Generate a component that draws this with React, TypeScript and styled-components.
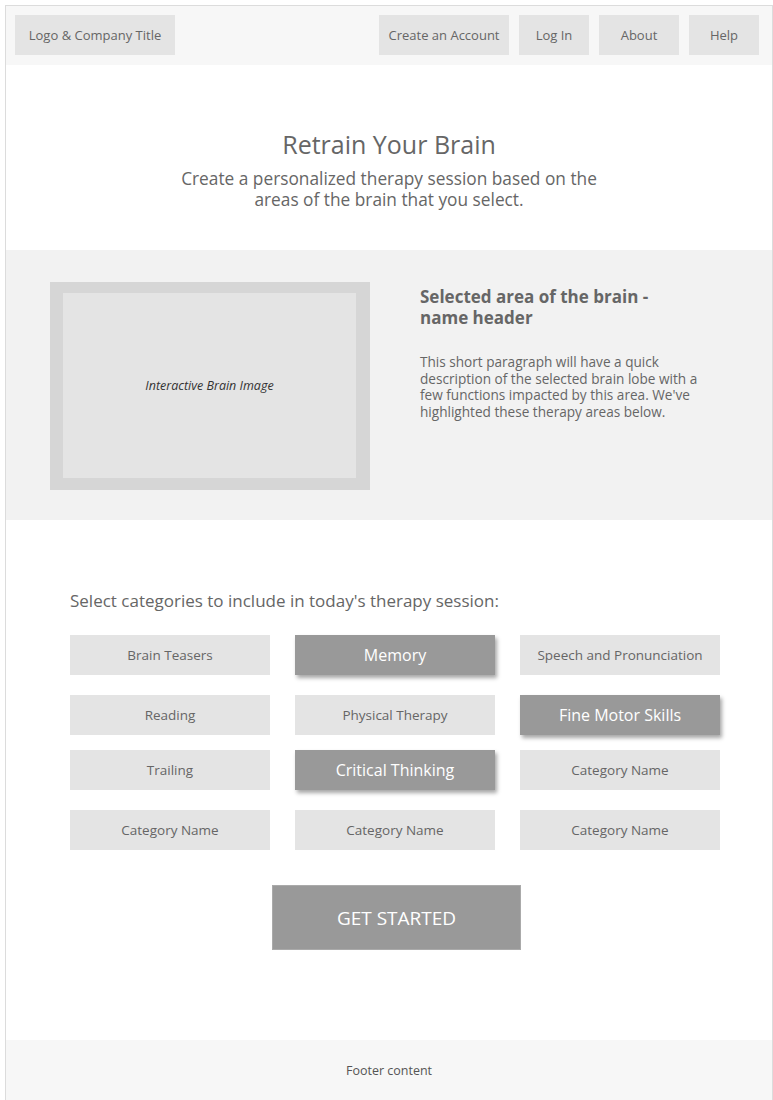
import styled, { createGlobalStyle } from "styled-components";

const GlobalStyle = createGlobalStyle`
  html, body {
    margin: 0;
    padding: 0;
    background: #fff;
  }
  body {
    font-family: "Open Sans", "Noto Sans", sans-serif;
    color: #666;
  }
`;

const navItems = [
  { label: "Create an Account", width: 130 },
  { label: "Log In", width: 70 },
  { label: "About", width: 80 },
  { label: "Help", width: 70 },
];

const categoryRows = [
  {
    top: 0,
    items: [
      { label: "Brain Teasers", active: false },
      { label: "Memory", active: true },
      { label: "Speech and Pronunciation", active: false },
    ],
  },
  {
    top: 20,
    items: [
      { label: "Reading", active: false },
      { label: "Physical Therapy", active: false },
      { label: "Fine Motor Skills", active: true },
    ],
  },
  {
    top: 15,
    items: [
      { label: "Trailing", active: false },
      { label: "Critical Thinking", active: true },
      { label: "Category Name", active: false },
    ],
  },
  {
    top: 20,
    items: [
      { label: "Category Name", active: false },
      { label: "Category Name", active: false },
      { label: "Category Name", active: false },
    ],
  },
];

export default function App() {
  return (
    <>
      <GlobalStyle />
      <Frame>
        <Header>
          <Tile $width={160}>Logo &amp; Company Title</Tile>
          <Nav>
            {navItems.map((item) => (
              <Tile key={item.label} $width={item.width}>
                {item.label}
              </Tile>
            ))}
          </Nav>
        </Header>

        <Hero>
          <Title>Retrain Your Brain</Title>
          <Subtitle>
            Create a personalized therapy session based on the
            <br />
            areas of the brain that you select.
          </Subtitle>
        </Hero>

        <Feature>
          <ImageBox>
            <ImageInner>Interactive Brain Image</ImageInner>
          </ImageBox>
          <Description>
            <AreaHeader>Selected area of the brain - name header</AreaHeader>
            <AreaText>
              This short paragraph will have a quick description of the selected
              brain lobe with a few functions impacted by this area. We've
              highlighted these therapy areas below.
            </AreaText>
          </Description>
        </Feature>

        <Categories>
          <Prompt>Select categories to include in today's therapy session:</Prompt>
          {categoryRows.map((row, i) => (
            <CategoryRow key={i} $top={row.top}>
              {row.items.map((item, j) => (
                <Category key={j} $active={item.active}>
                  {item.label}
                </Category>
              ))}
            </CategoryRow>
          ))}
          <StartButton>GET STARTED</StartButton>
        </Categories>

        <Footer>Footer content</Footer>
      </Frame>
    </>
  );
}

const Frame = styled.div`
  box-sizing: border-box;
  width: 768px;
  margin: 5px 0 0 5px;
  border: 1px solid #dcdcdc;
  border-bottom: none;
  display: flex;
  flex-direction: column;
`;

const Header = styled.header`
  height: 59px;
  box-sizing: border-box;
  background: #f7f7f7;
  display: flex;
  align-items: flex-start;
  justify-content: space-between;
  padding: 9px 13px 0 9px;
`;

const Nav = styled.nav`
  display: flex;
  gap: 10px;
`;

const Tile = styled.div<{ $width: number }>`
  width: ${(p) => p.$width}px;
  height: 40px;
  background: #e4e4e4;
  display: flex;
  align-items: center;
  justify-content: center;
  font-size: 13px;
  color: #666;
`;

const Hero = styled.section`
  height: 185px;
  display: flex;
  flex-direction: column;
  align-items: center;
  padding-top: 62px;
  box-sizing: border-box;
`;

const Title = styled.h1`
  margin: 0;
  font-size: 25px;
  font-weight: 400;
  line-height: 34px;
  color: #666;
`;

const Subtitle = styled.p`
  margin: 7px 0 0;
  font-size: 17.3px;
  line-height: 21px;
  text-align: center;
  color: #666;
`;

const Feature = styled.section`
  height: 270px;
  background: #f2f2f2;
  display: flex;
  padding: 32px 0 0 44px;
  box-sizing: border-box;
  gap: 50px;
`;

const ImageBox = styled.div`
  width: 320px;
  height: 208px;
  background: #d6d6d6;
  padding: 11px 14px 12px 13px;
  box-sizing: border-box;
`;

const ImageInner = styled.div`
  height: 100%;
  background: #e4e4e4;
  display: flex;
  align-items: center;
  justify-content: center;
  font-size: 12.5px;
  font-style: italic;
  color: #333;
`;

const Description = styled.div`
  width: 295px;
  padding-top: 4px;
`;

const AreaHeader = styled.h2`
  margin: 0;
  width: 250px;
  font-size: 17px;
  font-weight: 700;
  line-height: 21px;
  color: #666;
`;

const AreaText = styled.p`
  margin: 26px 0 0;
  font-size: 13.6px;
  line-height: 16.5px;
  color: #666;
`;

const Categories = styled.section`
  height: 520px;
  box-sizing: border-box;
  padding: 69px 0 0 64px;
  display: flex;
  flex-direction: column;
`;

const Prompt = styled.p`
  margin: 0 0 22px;
  font-size: 17px;
  line-height: 24px;
  color: #666;
`;

const CategoryRow = styled.div<{ $top: number }>`
  display: grid;
  grid-template-columns: 200px 200px 200px;
  column-gap: 25px;
  margin-top: ${(p) => p.$top}px;
`;

const Category = styled.div<{ $active: boolean }>`
  height: 40px;
  display: flex;
  align-items: center;
  justify-content: center;
  background: ${(p) => (p.$active ? "#999" : "#e4e4e4")};
  color: ${(p) => (p.$active ? "#fff" : "#666")};
  font-size: ${(p) => (p.$active ? "16px" : "13.5px")};
  box-shadow: ${(p) => (p.$active ? "2px 3px 4px rgba(0, 0, 0, 0.35)" : "none")};
`;

const StartButton = styled.button`
  align-self: flex-start;
  margin: 35px 0 0 202px;
  width: 249px;
  height: 65px;
  background: #999;
  border: 1px solid #aaa;
  color: #fff;
  font-family: "Open Sans", sans-serif;
  font-size: 19px;
  cursor: pointer;
`;

const Footer = styled.footer`
  height: 60px;
  background: #f7f7f7;
  border-bottom: 1px solid #dcdcdc;
  display: flex;
  align-items: center;
  justify-content: center;
  font-size: 12.5px;
  color: #555;
`;
